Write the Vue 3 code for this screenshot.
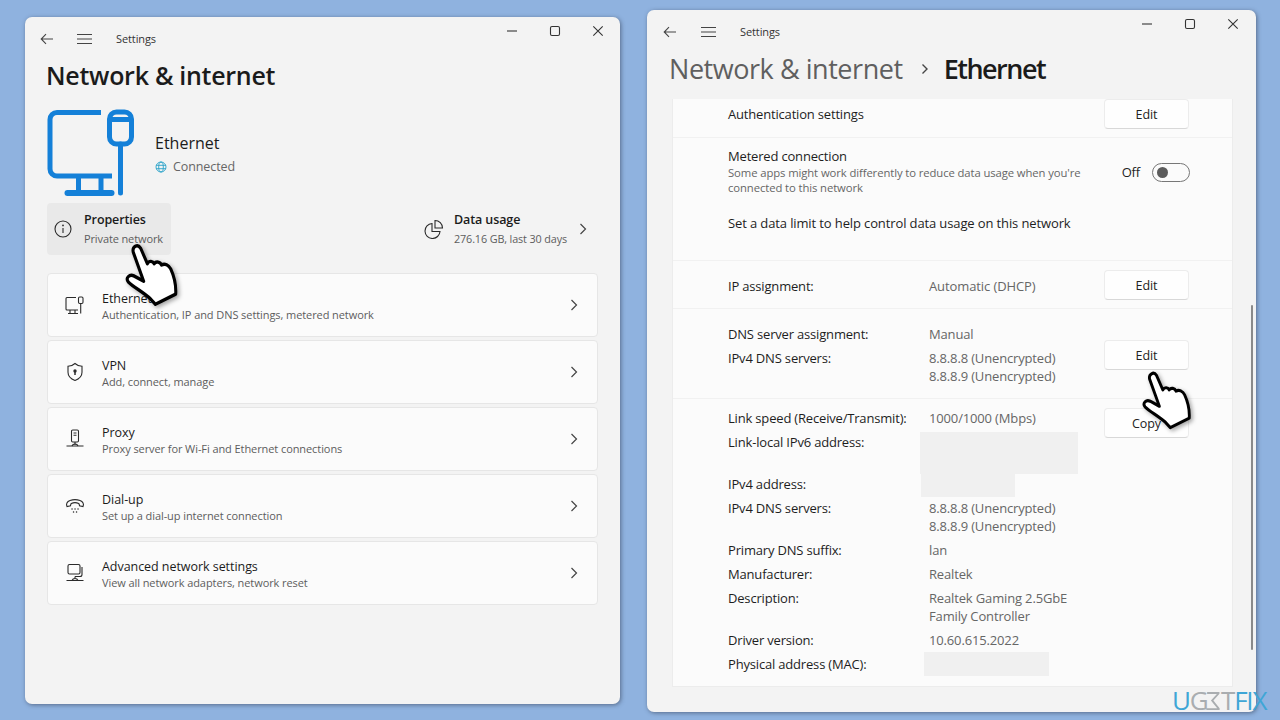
<template>
  <div class="desktop">
    <!-- left window -->
    <section class="win win-left">
      <header class="titlebar">
        <svg class="ic-back" width="14" height="12" viewBox="0 0 14 12"><path d="M13 6H1.5M6 1.2 1.2 6 6 10.8" /></svg>
        <svg class="ic-menu" width="15" height="12" viewBox="0 0 15 12"><path d="M0 1.5h15M0 6h15M0 10.5h15" /></svg>
        <span class="app-name">Settings</span>
      </header>
      <div class="caption-btns">
        <svg width="10" height="10" viewBox="0 0 10 10"><path d="M0 5h10" /></svg>
        <svg width="10" height="10" viewBox="0 0 10 10"><rect x=".5" y=".5" width="9" height="9" rx="1.5" /></svg>
        <svg width="10" height="10" viewBox="0 0 10 10"><path d="M.3.3l9.4 9.4M9.7.3.3 9.7" /></svg>
      </div>
      <h1 class="page-title">Network &amp; internet</h1>

      <div class="conn">
        <svg class="big-icon" width="88" height="88" viewBox="0 0 88 88">
          <path d="M54 3.5H10a7 7 0 0 0-7 7V60a7 7 0 0 0 7 7h55" />
          <path d="M31.500 67v15M54 67v15" />
          <path class="thick" d="M20.500 84h44" />
          <rect x="62.500" y="3" width="22" height="32" rx="7" />
          <path d="M62.500 10.500h22" />
          <path d="M73.500 35v49" stroke-linecap="round" />
        </svg>
        <div class="conn-text">
          <div class="conn-name">Ethernet</div>
          <div class="conn-state">
            <svg width="12" height="12" viewBox="0 0 12 12"><circle cx="6" cy="6" r="5" /><ellipse cx="6" cy="6" rx="2.300" ry="5" /><path d="M1 4.300h10M1 7.700h10" /></svg>
            Connected
          </div>
        </div>
      </div>

      <div class="summary">
        <div class="prop-box">
          <svg class="stroke-icon" width="18" height="18" viewBox="0 0 18 18"><circle cx="9" cy="9" r="8" /><path d="M9 8v5" /><circle class="dot" cx="9" cy="5.400" r=".9" /></svg>
          <div>
            <div class="sum-title">Properties</div>
            <div class="sum-sub">Private network</div>
          </div>
        </div>
        <div class="usage-box">
          <svg class="stroke-icon" width="20" height="20" viewBox="0 0 20 20"><path d="M8 4.500a7.500 7.500 0 1 0 8 8H8z" /><path d="M11 1.500a7.500 7.500 0 0 1 7.500 7.500H11z" /></svg>
          <div class="usage-text">
            <div class="sum-title">Data usage</div>
            <div class="sum-sub">276.16 GB, last 30 days</div>
          </div>
          <svg class="chev" width="8" height="12" viewBox="0 0 8 12"><path d="M1.500 1 6.500 6l-5 5" /></svg>
        </div>
      </div>

      <div class="cards">
        <div v-for="c in cards" :key="c.title" class="card">
          <svg class="stroke-icon card-icon" width="22" height="22" viewBox="0 0 22 22">
            <g v-if="c.icon === 'eth'">
              <path d="M12 3.500H3a1 1 0 0 0-1 1V15a1 1 0 0 0 1 1h11M6 16v3M11 16v3M4 19.500h10" />
              <rect x="14.500" y="3" width="4.500" height="6.500" rx="1.200" /><path d="M16.700 9.500v10" />
            </g>
            <g v-else-if="c.icon === 'vpn'">
              <path d="M11 2.500c2 1.800 4.500 2.700 7 2.800v6c0 4-3 6.700-7 8.200-4-1.500-7-4.200-7-8.200v-6c2.500-.1 5-1 7-2.800z" />
              <circle class="dot" cx="11" cy="10" r="1.700" /><path d="M11 10v4" stroke-width="1.500" />
            </g>
            <g v-else-if="c.icon === 'proxy'">
              <rect x="7.500" y="2" width="7" height="12" rx="1.200" /><path d="M9.500 5h3M9.500 7.200h3M11 14v3M2.500 18h17" />
              <path d="M8 18c.5-1.500 1.500-2 3-2s2.500.5 3 2" />
            </g>
            <g v-else-if="c.icon === 'dial'">
              <path d="M3 11.500c-1.200-2.500 0-5 3-6 3-1 7-1 10 0s4.200 3.500 3 6l-3.500-.8c-.2-1-.2-1.700-.8-2.200-2-.9-5.400-.9-7.400 0-.6.5-.6 1.200-.8 2.200z" />
              <path class="dots" d="M8 14h.1M11 14h.1M14 14h.1M9.500 17h.1M12.500 17h.1" />
            </g>
            <g v-else>
              <rect x="4" y="2.500" width="12" height="9.500" rx="1.500" /><path d="M18 5v7.500a2 2 0 0 1-2 2H11" />
              <path d="M11 14.500v2M2.500 18.500h17M8 18.500c.5-1.300 1.500-2 3-2s2.500.7 3 2" />
            </g>
          </svg>
          <div class="card-text">
            <div class="card-title">{{ c.title }}</div>
            <div class="card-sub">{{ c.sub }}</div>
          </div>
          <svg class="chev" width="8" height="12" viewBox="0 0 8 12"><path d="M1.500 1 6.500 6l-5 5" /></svg>
        </div>
      </div>
    </section>

    <!-- right window -->
    <section class="win win-right">
      <header class="titlebar">
        <svg class="ic-back" width="14" height="12" viewBox="0 0 14 12"><path d="M13 6H1.500M6 1.200 1.200 6 6 10.800" /></svg>
        <svg class="ic-menu" width="15" height="12" viewBox="0 0 15 12"><path d="M0 1.500h15M0 6h15M0 10.500h15" /></svg>
        <span class="app-name">Settings</span>
      </header>
      <div class="caption-btns">
        <svg width="10" height="10" viewBox="0 0 10 10"><path d="M0 5h10" /></svg>
        <svg width="10" height="10" viewBox="0 0 10 10"><rect x=".5" y=".5" width="9" height="9" rx="1.500" /></svg>
        <svg width="10" height="10" viewBox="0 0 10 10"><path d="M.3.3l9.400 9.400M9.700.3.3 9.700" /></svg>
      </div>
      <h1 class="crumbs">
        <span class="crumb-parent">Network &amp; internet</span>
        <svg width="8" height="12" viewBox="0 0 8 12"><path d="M1.500 1.500 6 6l-4.500 4.500" /></svg>
        <span class="crumb-current">Ethernet</span>
      </h1>

      <div class="panel">
        <div class="row row-auth">
          <span class="label">Authentication settings</span>
          <button class="btn">Edit</button>
        </div>
        <div class="row-metered">
          <div class="metered-top">
            <div>
              <div class="label">Metered connection</div>
              <p class="hint">Some apps might work differently to reduce data usage when you're connected to this network</p>
            </div>
            <div class="switch-wrap">
              <span class="label">Off</span>
              <span class="switch"><i></i></span>
            </div>
          </div>
          <div class="label limit">Set a data limit to help control data usage on this network</div>
        </div>
        <div class="row row-ip">
          <span class="label key">IP assignment:</span>
          <span class="val">Automatic (DHCP)</span>
          <button class="btn">Edit</button>
        </div>
        <div class="row row-dns">
          <dl class="kv">
            <dt>DNS server assignment:</dt><dd>Manual</dd>
            <dt>IPv4 DNS servers:</dt><dd class="two">8.8.8.8 (Unencrypted)<br />8.8.8.9 (Unencrypted)</dd>
          </dl>
          <button class="btn">Edit</button>
        </div>
        <div class="row row-details">
          <dl class="kv">
            <dt>Link speed (Receive/Transmit):</dt><dd>1000/1000 (Mbps)</dd>
            <dt>Link-local IPv6 address:</dt><dd class="h42"><i class="redact r1"></i></dd>
            <dt>IPv4 address:</dt><dd><i class="redact r2"></i></dd>
            <dt>IPv4 DNS servers:</dt><dd class="two">8.8.8.8 (Unencrypted)<br />8.8.8.9 (Unencrypted)</dd>
            <dt>Primary DNS suffix:</dt><dd>lan</dd>
            <dt>Manufacturer:</dt><dd>Realtek</dd>
            <dt>Description:</dt><dd class="two">Realtek Gaming 2.5GbE<br />Family Controller</dd>
            <dt>Driver version:</dt><dd>10.60.615.2022</dd>
            <dt>Physical address (MAC):</dt><dd class="h24"><i class="redact r3"></i></dd>
          </dl>
          <button class="btn">Copy</button>
        </div>
      </div>
      <div class="scrollbar"></div>
    </section>

    <!-- hand cursors -->
    <svg class="hand hand-left" width="60" height="71" viewBox="0 0 195 210" preserveAspectRatio="none"><path :d="handPath" /></svg>
    <svg class="hand hand-right" width="56" height="66" viewBox="0 0 195 210" preserveAspectRatio="none"><path :d="handPath" /></svg>

    <div class="logo"><span class="b">U</span><span class="g">G</span><span class="g esign">Σ</span><span class="g">T</span><span class="b">FIX</span></div>
  </div>
</template>

<script setup>
const handPath = 'M30 42C26 26 44 16 54 30L76 76C82 66 94 68 98 76C104 68 118 70 122 80C132 74 146 80 152 92C162 112 170 135 168 166L102 196L86 180C62 160 32 146 14 130C4 118 18 106 32 112L64 128Z'

const cards = [
  { icon: 'eth', title: 'Ethernet', sub: 'Authentication, IP and DNS settings, metered network' },
  { icon: 'vpn', title: 'VPN', sub: 'Add, connect, manage' },
  { icon: 'proxy', title: 'Proxy', sub: 'Proxy server for Wi-Fi and Ethernet connections' },
  { icon: 'dial', title: 'Dial-up', sub: 'Set up a dial-up internet connection' },
  { icon: 'adv', title: 'Advanced network settings', sub: 'View all network adapters, network reset' }
]
</script>

<style>
html, body { margin: 0; background: #8fb2df; }
</style>

<style scoped>
* { box-sizing: border-box; }

.desktop {
  position: relative;
  width: 1280px;
  height: 720px;
  overflow: hidden;
  background: #8fb2df;
  font-family: "Open Sans", "Noto Sans", sans-serif;
  color: #1b1b1b;
}

.win {
  position: absolute;
  background: #f3f3f3;
  border-radius: 7px;
  box-shadow: 1px 1px 4px rgba(40, 50, 70, .55);
}
.win-left { left: 25px; top: 17px; width: 595px; height: 687px; padding: 0 22px; }
.win-right { left: 647px; top: 10px; width: 609px; height: 702px; padding: 0 25px; }

.titlebar { display: flex; align-items: center; height: 42px; padding-top: 1px; }
.win-left .titlebar { margin-left: -7px; }
.win-right .titlebar { margin-left: -9px; height: 41px; }
.win-right .titlebar svg { margin-top: 2px; }
.titlebar svg { fill: none; stroke: #444; stroke-width: 1.1; }
.ic-menu { margin-left: 23px; }
.app-name { margin-left: 24px; font-size: 11px; letter-spacing: -.1px; color: #333; }
.win-right .ic-menu { margin-left: 24px; }
.win-right .app-name { margin-left: 24px; }

.caption-btns {
  position: absolute;
  top: 9px;
  right: 17px;
  display: flex;
  gap: 33px;
}
.caption-btns svg { fill: none; stroke: #333; stroke-width: 1.1; overflow: visible; }
.win-right .caption-btns { top: 9px; right: 18px; }

.page-title {
  margin: 0 0 0 -1px;
  font-size: 25px;
  line-height: 32px;
  font-weight: 600;
  letter-spacing: -.28px;
}

.conn { display: flex; align-items: center; margin-top: 18px; }
.big-icon { fill: none; stroke: #1480d8; stroke-width: 5; }
.big-icon .thick { stroke-linecap: round; stroke-width: 6; }
.conn-text { margin-left: 20px; margin-top: 2px; }
.conn-name { font-size: 16px; line-height: 24px; font-weight: 500; }
.conn-state { display: flex; align-items: center; gap: 6px; margin-top: 1px; font-size: 12.5px; line-height: 22px; color: #666; letter-spacing: -.1px; }
.conn-state svg { fill: none; stroke: #2aa3c8; stroke-width: .9; }

.summary { display: flex; justify-content: space-between; margin-top: 6px; }
.prop-box {
  display: flex;
  align-items: center;
  gap: 12px;
  width: 124px;
  height: 52px;
  padding-left: 7px;
  background: #e9e9e9;
  border-radius: 4px;
}
.usage-box { display: flex; align-items: center; padding-right: 11px; }
.usage-text { margin: 0 12px 0 10px; }
.usage-text .sum-sub { font-size: 10.8px; }
.sum-title { font-size: 12.5px; line-height: 19px; font-weight: 600; letter-spacing: -.1px; }
.sum-sub { font-size: 11px; line-height: 20px; color: #5d5d5d; white-space: nowrap; letter-spacing: -.12px; }
.stroke-icon { fill: none; stroke: #2b2b2b; stroke-width: 1.1; flex: none; }
.stroke-icon .dot { fill: #2b2b2b; stroke: none; }
.stroke-icon .dots { stroke-width: 1.400; stroke-linecap: round; }
.chev { fill: none; stroke: #444; stroke-width: 1.200; flex: none; }

.cards { display: flex; flex-direction: column; gap: 3px; margin-top: 18px; }
.card {
  display: flex;
  align-items: center;
  height: 64px;
  padding: 0 19px 0 16px;
  background: #fbfbfb;
  border: 1px solid #e6e6e6;
  border-radius: 4px;
}
.card-text { flex: 1; margin: 3px 0 0 16px; }
.card-title { font-size: 12.5px; line-height: 18px; letter-spacing: -.05px; }
.card-sub { margin-top: -1px; font-size: 11px; line-height: 16px; color: #5d5d5d; letter-spacing: -.08px; }

.crumbs {
  display: flex;
  align-items: center;
  margin: 0 0 0 -3px;
  height: 34px;
  font-size: 27px;
  font-weight: 500;
  letter-spacing: -.45px;
  white-space: nowrap;
}
.crumb-parent { color: #5f5f5f; }
.crumb-current { font-weight: 600; letter-spacing: -1.500px; }
.crumbs svg { margin: 2px 15px 0 18px; fill: none; stroke: #444; stroke-width: 1.400; }

.panel {
  width: 561px;
  height: 588px;
  margin-top: 14px;
  background: #fbfbfb;
  border: 1px solid #ececec;
  border-top: 0;
}
.row { display: flex; padding: 0 43px 0 55px; border-bottom: 1px solid #f1f1f1; }
.label, .kv dt { font-size: 13px; letter-spacing: -.18px; color: #1e1e1e; }
.btn {
  flex: none;
  width: 85px;
  height: 30px;
  margin-left: auto;
  padding: 0;
  background: #fefefe;
  border: 1px solid #ececec;
  border-bottom-color: #d8d8d8;
  border-radius: 4px;
  font: 12.5px "Open Sans", sans-serif;
  letter-spacing: -.1px;
  color: #222;
}
.row-auth { height: 39px; align-items: flex-start; }
.row-auth .label { margin-top: 6px; }
.row-metered { height: 123px; padding: 9px 42px 0 55px; border-bottom: 1px solid #f1f1f1; }
.metered-top { display: flex; justify-content: space-between; }
.hint { width: 372px; margin: 0; font-size: 11.3px; line-height: 15px; color: #666; letter-spacing: -.1px; }
.switch-wrap { display: flex; align-items: center; gap: 12px; height: 20px; margin-top: 15px; }
.switch { display: flex; align-items: center; width: 38px; height: 19px; padding-left: 4px; border: 1px solid #777; border-radius: 10px; }
.switch i { width: 11px; height: 11px; border-radius: 50%; background: #5c5c5c; }
.limit { margin-top: 19px; letter-spacing: -.12px; }

.row-ip { height: 48px; align-items: flex-start; }
.row-ip .label, .row-ip .val { margin-top: 16px; }
.row-ip .btn { margin-top: 9px; }
.key { width: 201px; }
.val { font-size: 13px; color: #666; letter-spacing: -.1px; }

.kv {
  display: grid;
  grid-template-columns: 201px 1fr;
  grid-auto-rows: min-content;
  align-content: start;
  margin: 0;
}
.kv dt, .kv dd { line-height: 24px; }
.kv dd { position: relative; margin: 0; font-size: 13px; color: #666; letter-spacing: -.15px; }
.kv dd.two { line-height: 18px; padding: 3px 0; }
.h42 { min-height: 42px; }
.h24 { min-height: 24px; }
.redact { position: absolute; background: #f0f0f0; }
.r1 { left: -9px; top: 2px; width: 158px; height: 42px; }
.r2 { left: -8px; top: 2px; width: 94px; height: 23px; }
.r3 { left: -5px; top: 0; width: 125px; height: 24px; }

.row-dns { height: 90px; padding-top: 13px; }
.row-dns .btn { margin-top: 18px; }
.row-details { height: 287px; padding-top: 7px; border-bottom: 0; }
.row-details .btn { margin-top: 2px; }

.scrollbar { position: absolute; left: 604px; top: 295px; width: 2px; height: 345px; background: #8a8a8a; border-radius: 1px; }

.hand { position: absolute; fill: #fff; stroke: #000; stroke-width: 10; stroke-linejoin: round; filter: drop-shadow(2px 2px 2px rgba(0, 0, 0, .35)); }
.hand-left { left: 124px; top: 238px; }
.hand-right { left: 1141px; top: 366px; }

.logo { position: absolute; left: 1172px; top: 684px; display: flex; font: 400 26px/32px "Open Sans", sans-serif; letter-spacing: -1.2px; }
.logo .b { color: #3fa6d6; }
.logo .g { color: #a9adb0; }
.logo .esign { display: inline-block; transform: scaleX(-1); }
</style>
